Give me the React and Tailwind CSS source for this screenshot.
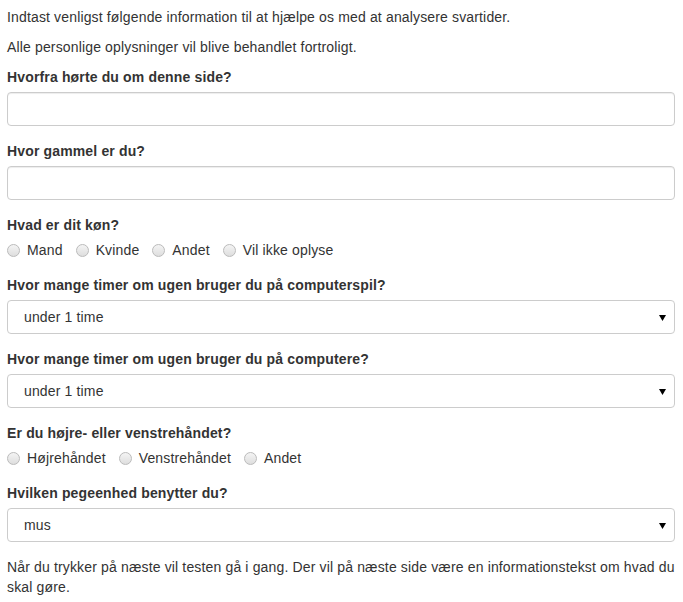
import React from "react";

const Label = ({ children }) => (
  <label className="block font-bold mb-[5px]">{children}</label>
);

const TextInput = () => (
  <input
    type="text"
    className="block w-full h-[34px] px-3 border border-[#ccc] rounded bg-white shadow-[inset_0_1px_1px_rgba(0,0,0,0.075)] outline-none"
  />
);

const Select = ({ value }) => (
  <div className="relative h-[34px] border border-[#ccc] rounded bg-white flex items-center pl-4 pr-3">
    <span>{value}</span>
    {/* little dropdown arrow */}
    <svg
      className="absolute right-[8px] top-[14px]"
      width="7"
      height="6"
      viewBox="0 0 7 6"
    >
      <polygon points="0,0 7,0 3.5,6" fill="#000" />
    </svg>
  </div>
);

const Radio = ({ label }) => (
  <label className="flex items-center h-5">
    <span className="w-[13px] h-[13px] rounded-full border border-[#bbb] bg-gradient-to-b from-[#f4f4f4] to-[#dedede] mr-[7px]" />
    <span>{label}</span>
  </label>
);

const RadioGroup = ({ options }) => (
  <div className="flex gap-[13px] mt-px pb-px">
    {options.map((o) => (
      <Radio key={o} label={o} />
    ))}
  </div>
);

export default function App() {
  return (
    <div className="bg-white text-[#333] text-[14px] leading-5 tracking-[0.15px] font-['Liberation_Sans',Arial,sans-serif] pl-[7px] pr-2 pt-[7px] pb-3 w-[683px]">
      <p className="mb-[10px]">
        Indtast venligst følgende information til at hjælpe os med at analysere svartider.
      </p>
      <p className="mb-[10px]">Alle personlige oplysninger vil blive behandlet fortroligt.</p>

      <div className="mb-[15px]">
        <Label>Hvorfra hørte du om denne side?</Label>
        <TextInput />
      </div>

      <div className="mb-[15px]">
        <Label>Hvor gammel er du?</Label>
        <TextInput />
      </div>

      <div className="mb-[14px]">
        <Label>Hvad er dit køn?</Label>
        <RadioGroup options={["Mand", "Kvinde", "Andet", "Vil ikke oplyse"]} />
      </div>

      <div className="mb-[15px]">
        <Label>Hvor mange timer om ugen bruger du på computerspil?</Label>
        <Select value="under 1 time" />
      </div>

      <div className="mb-[15px]">
        <Label>Hvor mange timer om ugen bruger du på computere?</Label>
        <Select value="under 1 time" />
      </div>

      <div className="mb-[14px]">
        <Label>Er du højre- eller venstrehåndet?</Label>
        <RadioGroup options={["Højrehåndet", "Venstrehåndet", "Andet"]} />
      </div>

      <div className="mb-[15px]">
        <Label>Hvilken pegeenhed benytter du?</Label>
        <Select value="mus" />
      </div>

      <p>
        Når du trykker på næste vil testen gå i gang. Der vil på næste side være en
        informationstekst om hvad du skal gøre.
      </p>
    </div>
  );
}
